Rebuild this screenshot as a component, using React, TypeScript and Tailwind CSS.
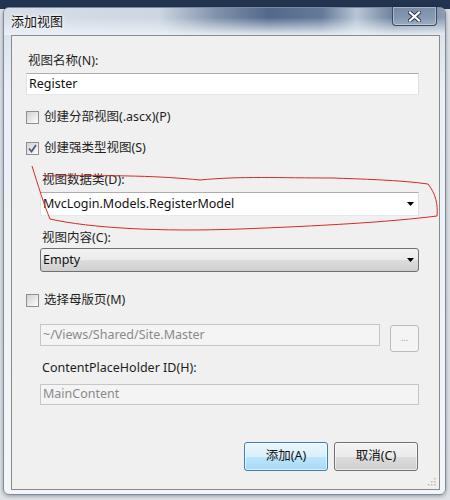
import React from 'react';

// Win7-style "添加视图" dialog with a hand-drawn red annotation.

const font = "font-['Noto_Sans','Noto_Sans_CJK_SC',sans-serif]";

function Arrow() {
  return (
    <svg width="7" height="4" viewBox="0 0 7 4" className="shrink-0">
      <path d="M0 0 H7 L3.5 4 Z" fill="#000" />
    </svg>
  );
}

function CheckBox({ checked, label }: { checked?: boolean; label: string }) {
  return (
    <div className="flex h-4 items-center">
      <div className="flex h-[13px] w-[13px] items-center justify-center border border-[#8e8f8f] bg-[linear-gradient(135deg,#d2d2d2,#f0f0f0_70%,#ffffff)]">
        {checked && (
          <svg width="9" height="9" viewBox="0 0 9 9">
            <path d="M1 4.5 L3.5 7.5 L8 1" fill="none" stroke="#4a5d80" strokeWidth="1.8" />
          </svg>
        )}
      </div>
      <span className="ml-[5px] text-[12.5px] leading-4 text-[#1e1e1e]">{label}</span>
    </div>
  );
}

function Label({ text, className = '' }: { text: string; className?: string }) {
  return <div className={`h-4 text-[12.5px] leading-4 text-[#1e1e1e] ${className}`}>{text}</div>;
}

export default function App() {
  return (
    <div
      className={`relative h-[500px] w-[450px] overflow-hidden bg-[linear-gradient(to_bottom,#22344f_0,#22344f_9px,#dfe3e8_9px)] pl-[3px] pt-[7px] ${font}`}
    >
      {/* Window */}
      <div className="flex h-[488px] w-[443px] flex-col rounded-[6px] border border-[#7d8b9c] bg-[linear-gradient(to_bottom,#d3dde8,#eaf0f6_80px,#f3f6f9)] shadow-[0_1px_4px_rgba(0,0,0,0.35)]">
        {/* Title bar */}
        <div className="flex h-[27px] items-start justify-between rounded-t-[5px] bg-[linear-gradient(to_bottom,rgba(255,255,255,0)_0,rgba(255,255,255,0)_35%,rgba(236,241,247,0.95)_100%),linear-gradient(to_right,#d7dee7_0,#cdd6e1_35%,#8193ac_48%,#52698b_60%,#647a99_72%,#b8c5d5_80%,#6f84a1_88%,#8a9bb3_100%)]">
          <span className="ml-[7px] mt-[5px] text-[13px] leading-4 text-[#151515] [text-shadow:0_0_6px_#fff,0_0_3px_#fff]">
            添加视图
          </span>
          <div className="mr-[8px] mt-[-1px] flex h-[19px] w-[45px] items-center justify-center rounded-b-[4px] border border-t-0 border-[#3d4a5c] bg-[linear-gradient(to_bottom,rgba(120,140,168,0.7),rgba(150,168,192,0.7))] shadow-[inset_0_0_0_1px_rgba(255,255,255,0.35)]">
            <svg width="13" height="11" viewBox="0 0 13 11">
              <path d="M2 1.5 L11 9.5 M11 1.5 L2 9.5" stroke="#2c3644" strokeWidth="4" strokeLinecap="square" />
              <path d="M2 1.5 L11 9.5 M11 1.5 L2 9.5" stroke="#fff" strokeWidth="2.2" strokeLinecap="square" />
            </svg>
          </div>
        </div>

        {/* Client area */}
        <div className="relative ml-[7px] flex h-[455px] w-[429px] flex-col border border-[#8a8a8a] bg-[#f0f0f0] pl-[14px] pr-[20px]">
          <Label text="视图名称(N):" className="ml-[2px] mt-[17px]" />
          <div className="mt-[4px] flex h-[22px] items-center border border-[#abadb3] border-b-[#e3e9ef] border-l-[#e2e3ea] border-r-[#dbdfe6] bg-white pl-[2px] text-[12.5px] text-[#111]">
            Register
          </div>

          <div className="mt-[14px]">
            <CheckBox label="创建分部视图(.ascx)(P)" />
          </div>
          <div className="mt-[15px]">
            <CheckBox checked label="创建强类型视图(S)" />
          </div>

          <div className="flex flex-col pl-[14px]">
            <Label text="视图数据类(D):" className="ml-[2px] mt-[16px]" />
            <div className="mt-[4px] flex h-[24px] items-center justify-between border border-[#abadb3] border-b-[#e3e9ef] border-l-[#e2e3ea] border-r-[#dbdfe6] bg-white pl-[2px] pr-[4px] text-[12.5px] text-[#111]">
              <span>MvcLogin.Models.RegisterModel</span>
              <Arrow />
            </div>

            <Label text="视图内容(C):" className="ml-[2px] mt-[14px]" />
            <div className="mt-[2px] flex h-[24px] items-center justify-between rounded-[3px] border border-[#707070] bg-[linear-gradient(to_bottom,#f2f2f2,#ebebeb_50%,#dddddd_50%,#cfcfcf)] pl-[2px] pr-[4px] text-[12.5px] text-[#111]">
              <span>Empty</span>
              <Arrow />
            </div>
          </div>

          <div className="mt-[20px]">
            <CheckBox label="选择母版页(M)" />
          </div>

          <div className="flex flex-col pl-[14px]">
            <div className="mt-[16px] flex items-start justify-between">
              <div className="flex h-[22px] w-[340px] items-center border border-[#c3c6cc] bg-[#f4f4f4] pl-[2px] text-[12.5px] text-[#8a8a8a]">
                ~/Views/Shared/Site.Master
              </div>
              <div className="mt-[1px] flex h-[27px] w-[29px] items-center justify-center rounded-[3px] border border-[#b7bcc1] bg-[#f4f4f4] pb-[2px] text-[9px] text-[#9a9a9a]">
                ...
              </div>
            </div>
            <Label text="ContentPlaceHolder ID(H):" className="ml-[2px] mt-[8px]" />
            <div className="mt-[8px] flex h-[21px] items-center border border-[#c3c6cc] bg-[#f4f4f4] pl-[2px] text-[12.5px] text-[#8a8a8a]">
              MainContent
            </div>
          </div>

          <div className="mr-[1px] mt-[37px] flex justify-end gap-[6px]">
            <div className="flex h-[29px] w-[84px] items-center justify-center rounded-[3px] border border-[#3c7fb1] bg-[linear-gradient(to_bottom,#eaf6fd,#d9f0fc_50%,#bee6fd_50%,#a7d9f5)] text-[12.5px] text-[#111] shadow-[inset_0_0_0_1px_rgba(255,255,255,0.6)]">
              添加(A)
            </div>
            <div className="flex h-[29px] w-[84px] items-center justify-center rounded-[3px] border border-[#707070] bg-[linear-gradient(to_bottom,#f2f2f2,#ebebeb_50%,#dddddd_50%,#cfcfcf)] text-[12.5px] text-[#111] shadow-[inset_0_0_0_1px_rgba(255,255,255,0.6)]">
              取消(C)
            </div>
          </div>

          {/* size grip */}
          <svg className="absolute bottom-[3px] right-[3px]" width="9" height="9" viewBox="0 0 9 9">
            {[
              [7, 1],
              [7, 4],
              [4, 4],
              [7, 7],
              [4, 7],
              [1, 7],
            ].map(([x, y], i) => (
              <rect key={i} x={x} y={y} width="1.5" height="1.5" fill="#b9b9b9" />
            ))}
          </svg>
        </div>
      </div>

      {/* Red hand-drawn annotation */}
      <svg className="pointer-events-none absolute left-0 top-0" width="450" height="500" viewBox="0 0 450 500">
        <path
          d="M32 166 C38 185 44 205 50 219 C90 228 160 232 240 229 C320 226 390 222 437 216 C438 205 436 194 428 184 C400 180 360 179 333 178 C280 178 240 176 200 180 C160 176 120 175 44 176"
          fill="none"
          stroke="#d42a2a"
          strokeWidth="1"
        />
      </svg>
    </div>
  );
}
